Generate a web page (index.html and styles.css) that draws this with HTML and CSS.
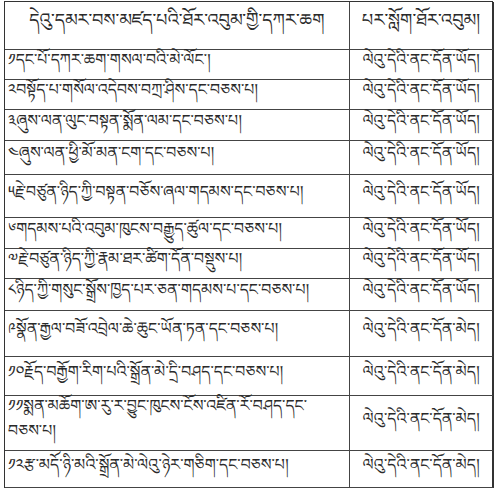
FILE: index.html
```html
<!DOCTYPE html>
<html><head><meta charset="utf-8"><link rel="stylesheet" href="styles.css"></head>
<body>
<div class="tbl">
  <div class="c h">དེའུ་དམར་བས་མཛད་པའི་ཐོར་འབུམ་གྱི་དཀར་ཆག</div>
  <div class="c h r">པར་སློག་ཐོར་འབུམ།</div>
  <div class="c">༡དང་པོ་དཀར་ཆག་གསལ་བའི་མེ་ལོང་།</div>
  <div class="c r">ལེའུ་དེའི་ནང་དོན་ཡོད།</div>
  <div class="c">༢བསྟོད་པ་གསོལ་འདེབས་བཀྲ་ཤིས་དང་བཅས་པ།</div>
  <div class="c r">ལེའུ་དེའི་ནང་དོན་ཡོད།</div>
  <div class="c">༣ཞུས་ལན་ལུང་བསྟན་སྨོན་ལམ་དང་བཅས་པ།</div>
  <div class="c r">ལེའུ་དེའི་ནང་དོན་ཡོད།</div>
  <div class="c">༤ཞུས་ལན་ཕྱི་མོ་མན་ངག་དང་བཅས་པ།</div>
  <div class="c r">ལེའུ་དེའི་ནང་དོན་ཡོད།</div>
  <div class="c">༥རྗེ་བཙུན་ཉིད་ཀྱི་བསྟན་བཅོས་ཞལ་གདམས་དང་བཅས་པ།</div>
  <div class="c r">ལེའུ་དེའི་ནང་དོན་ཡོད།</div>
  <div class="c">༦གདམས་པའི་འབུམ་ཁུངས་བརྒྱུད་ཚུལ་དང་བཅས་པ།</div>
  <div class="c r">ལེའུ་དེའི་ནང་དོན་ཡོད།</div>
  <div class="c">༧རྗེ་བཙུན་ཉིད་ཀྱི་རྣམ་ཐར་ཚིག་དོན་བསྡུས་པ།</div>
  <div class="c r">ལེའུ་དེའི་ནང་དོན་ཡོད།</div>
  <div class="c">༨ཉིད་ཀྱི་གསུང་སྒྲོས་ཁྱད་པར་ཅན་གདམས་པ་དང་བཅས་པ།</div>
  <div class="c r">ལེའུ་དེའི་ནང་དོན་ཡོད།</div>
  <div class="c">༩སྣོན་རྒྱལ་བཟོ་འབྲེལ་ཆེ་ཆུང་ཡོན་ཏན་དང་བཅས་པ།</div>
  <div class="c r">ལེའུ་དེའི་ནང་དོན་མེད།</div>
  <div class="c">༡༠རྗོད་བརྒྱོག་རིག་པའི་སྒྲོན་མེ་དྲི་བཤད་དང་བཅས་པ།</div>
  <div class="c r">ལེའུ་དེའི་ནང་དོན་མེད།</div>
  <div class="c">༡༡སྨན་མཆོག་ཨ་རུ་ར་བྱུང་ཁུངས་ངོས་འཛིན་རོ་བཤད་དང་<br>བཅས་པ།</div>
  <div class="c r">ལེའུ་དེའི་ནང་དོན་མེད།</div>
  <div class="c">༡༢རྩ་མདོ་ཉི་མའི་སྒྲོན་མེ་ལེའུ་ཉེར་གཅིག་དང་བཅས་པ།</div>
  <div class="c r">ལེའུ་དེའི་ནང་དོན་མེད།</div>
</div>
</body></html>
```
FILE: styles.css
```css
html,body{margin:0;padding:0;background:#fff;}
body{padding:1px 0 0 4px;}
.tbl{
  display:grid;
  width:489px;
  grid-template-columns:345px 144px;
  grid-template-rows:48px 30px 30px 31px 34px 43px 31px 30px 32px 46px 39px 55px 37px;
  border-top:1px solid #333;
  border-left:1px solid #333;
  box-sizing:border-box;
  font-family:"Noto Serif Tibetan","Noto Sans Tibetan",serif;
  font-size:15.8px;
  color:#2a2a2a;
}
.c{
  box-sizing:border-box;
  border-right:1px solid #444;
  border-bottom:1px solid #444;
  display:flex;
  align-items:center;
  padding:0 3px;
  line-height:25px;
  white-space:nowrap;
}
.r{justify-content:center;border-right:2px solid #333;}
.h{justify-content:center;font-size:17.7px;}
```
